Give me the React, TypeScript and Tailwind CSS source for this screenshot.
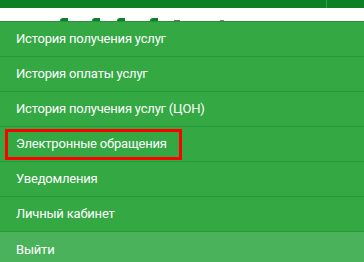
const items = [
  "История получения услуг",
  "История оплаты услуг",
  "История получения услуг (ЦОН)",
  "Электронные обращения",
  "Уведомления",
  "Личный кабинет",
];

export default function App() {
  return (
    <div className="w-[364px] h-[262px] overflow-hidden bg-white font-['Roboto',sans-serif] tracking-[-0.2px]">
      <div className="h-[8px] bg-[#0b8025] flex justify-end">
        <div className="w-px h-full bg-[#3c9a4f] mr-[37px]" />
      </div>
      <div className="h-[13px] bg-white flex items-end pl-[60px]">
        <div className="w-[8px] h-[3px] bg-[#0b8025] rounded-tl-full" />
        <div className="w-[8px] h-[3px] bg-[#0b8025] rounded-tl-full ml-[24px]" />
        <div className="w-[8px] h-[3px] bg-[#0b8025] rounded-tl-full ml-[17px]" />
        <div className="w-[8px] h-[3px] bg-[#0b8025] rounded-tl-full ml-[25px]" />
        <div className="w-[6px] h-[1px] bg-[#7a6a5a] ml-[16px]" />
        <div className="w-[4px] h-[1px] bg-[#8a7a9a] ml-[40px]" />
      </div>
      <nav className="border-t border-[#27913a] flex flex-col">
        {items.map((label, i) => (
          <div
            key={label}
            className="h-[35px] bg-[#33a843] border-b border-[#239a35] flex items-center px-[5px] whitespace-nowrap"
          >
            <span
              className={
                i === 3
                  ? "border-[3px] border-[#ff0000] w-[177px] h-[31px] flex items-center pl-[8px] text-white text-[13px]"
                  : "pl-[11px] text-white text-[13px]"
              }
            >
              {label}
            </span>
          </div>
        ))}
        <div className="h-[35px] bg-[#4ab25a] flex items-center pl-[16px] text-white text-[13px]">
          Выйти
        </div>
      </nav>
    </div>
  );
}
